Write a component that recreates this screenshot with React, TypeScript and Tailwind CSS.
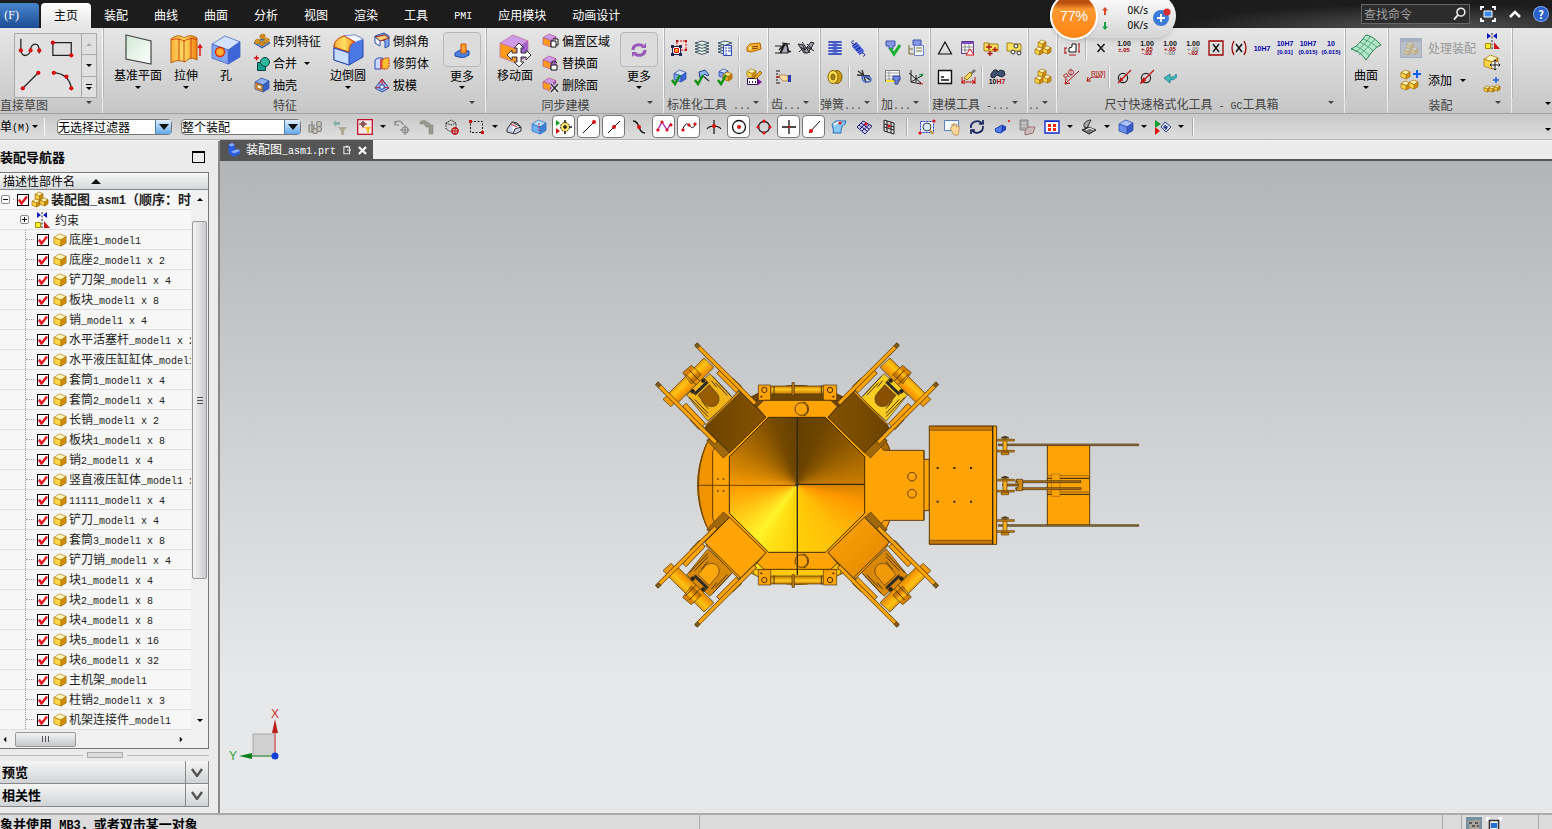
import type { ReactNode } from "react";
import clsx from "clsx";

const cube = (x: number, y: number, s: number, c = ["#fff4b8", "#ffd548", "#d08c10"], line = "#a87408") => (
	<g transform={`translate(${x} ${y}) scale(${s / 12})`} stroke={line} strokeWidth={9 / s} strokeLinejoin="round">
		<path d="M0 3.5 5.5 0 12 2.5 7 6Z" fill={c[0]} />
		<path d="M0 3.5 7 6V12L0 9.5Z" fill={c[1]} />
		<path d="M7 6 12 2.5V9L7 12Z" fill={c[2]} />
	</g>
);

const cubes = (
	<>
		{cube(3, 0, 8)}
		{cube(0, 7, 8)}
		{cube(8, 6, 8)}
	</>
);

const blue = ["#d5e2ff", "#7fa5f5", "#3c66d8"];
const warm = ["#cf9be8", "#ff9a1a", "#a060d0"];

const dot = (x: number, y: number, r = 1.6) => <circle cx={x} cy={y} r={r} fill="#e01010" />;
const check = <path d="M1 11l3 4 5-9" fill="none" stroke="#109010" strokeWidth="2.4" />;

const layers = (
	<g fill="#e4f0ea" stroke="#304858" strokeWidth=".9">
		{[11, 8, 5, 2].map((y) => (
			<path key={y} d={`M1 ${y + 1}l7 2.4 7-2.4-7-2z`} />
		))}
	</g>
);

const tolerance = (top: string, mid: string, low?: string, midColor = "#a00000", lowColor = "#a00000") => (
	<g fontFamily="Liberation Sans" textAnchor="middle" fontWeight="bold">
		<text x="8" y="6" fontSize="7" fill="#111">{top}</text>
		<text x="8" y={low ? 11 : 12} fontSize="6" fill={midColor}>{mid}</text>
		{low && <text x="8" y="15" fontSize="6" fill={lowColor}>{low}</text>}
	</g>
);

const fit = (top: string, low?: string) => (
	<g fontFamily="Liberation Sans" textAnchor="middle" fill="#0000a8" fontWeight="bold">
		<text x="8" y={low ? 6 : 11} fontSize="7">{top}</text>
		{low && <text x="8" y="14" fontSize="6">{low}</text>}
	</g>
);

const diameter = (
	<>
		<circle cx="7" cy="9" r="4.6" fill="none" stroke="#222" strokeWidth="1.2" />
		<path d="M2 14 15 1M4 12l1-3.5M4 12l3-1" stroke="#c01010" strokeWidth="1.3" fill="none" />
	</>
);

const art: Record<string, ReactNode> = {
	part: cube(1, 1, 14),
	assembly: cubes,
	constraint: (
		<>
			<path d="M3 0v6l4-3zM13 0v6L9 3z" fill="#1018c0" />
			<path d="M8 0v16" stroke="#222" strokeDasharray="2 1.5" />
			<path d="M1.5 10.500h5v5h-5z" fill="#ffee30" stroke="#a09000" />
			<path d="M10 9v7h6z" fill="#d01818" />
		</>
	),
	pattern: (
		<>
			<path d="M0 10l8-4 8 4-8 5z" fill="#6f98ee" stroke="#2a4fa8" />
			{cube(1, 6, 5, warm.map(() => "#ffb030"))}
			{cube(6, 1, 5, warm.map(() => "#ff9a1a"))}
			{cube(10, 5, 5, warm.map(() => "#ffb030"))}
			{cube(6, 8, 5, warm.map(() => "#ff9a1a"))}
		</>
	),
	unite: (
		<>
			<path d="M3.500 7.500h8v8h-8z" fill="#18a090" stroke="#064038" />
			<circle cx="11" cy="7" r="4.5" fill="#30b8a0" stroke="#064038" />
			<path d="M0 3h5M2.500.5v5" stroke="#d01010" strokeWidth="1.3" />
		</>
	),
	shell: (
		<>
			{cube(1, 1, 14, ["#8fb0f5", "#ffa030", "#3460c8"], "#2a4fa8")}
			<path d="M3 7l5 2v4l-5-2z" fill="#fff0d0" stroke="#a05000" />
		</>
	),
	chamfer: (
		<>
			<path d="M1 3l9-3 5 3v10l-4 2V8L1 5z" fill="#7fa5f5" stroke="#2a4fa8" />
			<path d="M1 4l10-2 4 3-9 3z" fill="#ffcf80" stroke="#b02000" />
			<path d="M1 4v6l5 3V8z" fill="#fff" stroke="#2a4fa8" />
		</>
	),
	trim: (
		<>
			<path d="M1 5l3-2h5v9l-2 2H1z" fill="#c8d8ff" stroke="#3048b0" />
			<path d="M8 5l3-2h4v9l-2 2H8z" fill="#ffc030" stroke="#c02000" strokeDasharray="2 1" />
			<path d="M7 4v10" stroke="#e02020" strokeWidth="1.5" />
		</>
	),
	draft: (
		<>
			<path d="M8 2l7 9-7 4-7-4z" fill="#9db9f6" stroke="#2a4fa8" />
			<path d="M8 2v9M1 11l7-1 7 1M5 7l3-5 3 5" stroke="#d02020" fill="none" />
			<path d="M6 8h4v4H6z" fill="#e8efff" stroke="#2a4fa8" />
		</>
	),
	offset: (
		<>
			{cube(0, 1, 13, warm, "#b05890")}
			<path d="M8 8h5v6H8zM10 6h5v6h-2" fill="#fff" stroke="#111" />
		</>
	),
	replace: (
		<>
			{cube(0, 1, 13, warm, "#b05890")}
			<path d="M8 10h6v5H8zM9 9V7h3M14 8l-2-2" fill="#fff" stroke="#111" />
		</>
	),
	remove: (
		<>
			{cube(0, 1, 13, warm, "#b05890")}
			<path d="M8 7l7 8M15 7l-7 8" stroke="#fff" strokeWidth="3" />
			<path d="M8 7l7 8M15 7l-7 8" stroke="#222" strokeWidth="1.4" />
		</>
	),
	attrs: (
		<>
			<path d="M6 1h9v9H6z" fill="#ffdcdc" stroke="#c01010" strokeDasharray="2 1" />
			<path d="M5 0h2v2H5zM14 0h2v2h-2zM14 9h2v2h-2z" fill="#c01010" />
			<path d="M1.500 6.500h8v8h-8z" fill="#fff" stroke="#202850" />
			<path d="M3.500 8.500h4v4h-4z" fill="#ffb000" stroke="#e00000" />
			<path d="M0 5h3v3H0zM8 5h3v3H8zM0 13h3v3H0zM8 13h3v3H8z" fill="#202850" />
		</>
	),
	layers,
	layerList: (
		<>
			{layers}
			<path d="M6.500 5.500h8v10h-8z" fill="#eef2ff" stroke="#3048c0" />
			<path d="M8 8h2M8 11h2M8 14h2M11 8h3M11 11h3" stroke="#3048c0" />
		</>
	),
	tag: (
		<>
			<path d="M1 7l3-3 10-1 1 6-10 3-4-1z" fill="#ffb830" stroke="#b06000" />
			<path d="M6 7l6-1M6 9l6-1" stroke="#7a3c00" />
			<circle cx="4" cy="8" r="1" fill="#fff" />
		</>
	),
	checkPart: <>{cube(3, 1, 12, blue, "#2848a8")}{check}</>,
	checkSketch: (
		<>
			<path d="M5 3l6-2 4 5-2 1-2-2-5 4z" fill="#8fb8f8" stroke="#204080" />
			<path d="M9 7l6 5" stroke="#333" strokeWidth="1.5" />
			{check}
		</>
	),
	checkAsm: <>{cube(2, 0, 9, blue, "#2848a8")}{cube(6, 3, 9, ["#ffe080", "#ffb020", "#c07800"])}{check}</>,
	editPart: (
		<>
			{cube(1, 0, 9)}
			<path d="M1.500 9.500h10v6h-10z" fill="#fff" stroke="#301060" />
			<path d="M3 13h1M6 13h1M9 13h1" stroke="#301060" strokeWidth="2" />
			<path d="M8 9l6-7 2 2-6 6z" fill="#ffb020" stroke="#704000" strokeWidth=".7" />
			<path d="M12 10l4 3-4 3z" fill="#8010a0" />
		</>
	),
	gear: (
		<g fill="none" stroke="#222">
			<path d="M5 13l4-8h3l1 8z" fill="#aab" />
			<path d="M0 6h6M0 13h5l4-9h3l2 9M4 10l5-6M6 13l4-9M13 10l3 2M7 3l8 1" strokeWidth="1.200" />
		</g>
	),
	gearPair: (
		<g fill="#99a" stroke="#222">
			<path d="M0 4l5 1 2 5 6-8 3 1-6 10H6z" />
			<path d="M1 12c4-5 9-6 15-1M4 2l8 11M3 7l5 6M9 4l5 5" fill="none" />
		</g>
	),
	hand: (
		<>
			<path d="M1 2h4M1 5h2M1 8h4M1 11h2M1 14h4" stroke="#111" />
			<path d="M1 8h4" stroke="#e00" />
			<path d="M4 6h5l4 1v5H8l-3-3z" fill="#ffdca0" stroke="#a07030" strokeWidth=".7" />
			<path d="M13 6h3v7h-3z" fill="#2838b0" />
		</>
	),
	spring: (
		<>
			<path d="M3 2h10v12H3z" fill="#e8ecff" />
			<path d="M2 2h12M2 5h12M2 8h12M2 11h12M2 14h12" stroke="#1828a8" strokeWidth="1.700" strokeLinecap="round" />
			<path d="M14 2 2 5M14 5 2 8M14 8 2 11M14 11 2 14" stroke="#4060d8" />
		</>
	),
	tension: (
		<>
			<path d="M4 4l8 9" stroke="#2840c0" strokeWidth="6" />
			<path d="M3 7l6-4M5 9l6-4M7 12l6-4M8 14l6-4" stroke="#a0b0f8" strokeWidth=".700" />
			<path d="M4 4C0 4 2 0 4 1M12 13c4 0 3 4 1 3" fill="none" stroke="#10188c" />
		</>
	),
	disc: (
		<g stroke="#806000">
			<ellipse cx="10" cy="8" rx="5" ry="6.500" fill="#c89a10" />
			<ellipse cx="6" cy="8" rx="5" ry="6.500" fill="#ffdc50" />
			<ellipse cx="6" cy="8" rx="2" ry="3" fill="#a08020" />
		</g>
	),
	cut: (
		<g fill="none" strokeWidth="1.400">
			<path d="M2 2l12 9M1 6l13 1M6 1l4 13" stroke="#333" />
			<path d="M6 8c0 6 8 6 9 3s-6-4-9-3z" stroke="#4068d0" />
		</g>
	),
	millCheck: (
		<>
			<path d="M1 1h9v5H8v3H4V6H1z" fill="#8898e8" stroke="#4050a8" />
			<path d="M5 8l4 6 6-9" fill="none" stroke="#18b030" strokeWidth="3" />
		</>
	),
	millSheet: (
		<>
			<path d="M5 0h8v5h-2v2H7V5H5z" fill="#8898e8" stroke="#4050a8" />
			<path d="M6.500 5.500h9v10h-9z" fill="#f4f6ff" stroke="#7080c0" />
			<path d="M1 5v9h5M1 9h4M8 8h6M8 11h6" stroke="#707030" fill="none" />
		</>
	),
	millTable: (
		<>
			<path d="M.5 1.500h14v11H.5z" fill="#fff" stroke="#777" />
			<path d="M0 4h15M0 7h15M0 10h15M4 1v12" stroke="#999" />
			<path d="M1 11h9v2H1z" fill="#ffe030" />
			<path d="M8 7h7v4h-2v4h-3v-4H8z" fill="#7088e0" stroke="#304090" />
		</>
	),
	axes: (
		<g fill="none" stroke="#222">
			<path d="M3 13V1M3 13l12-7M1 4l12 10M3 13l10 2M8 6v7" />
			<path d="M11 6l4-1-2 3" stroke="#109030" />
			<path d="M11 14l4 1" stroke="#c01010" />
		</g>
	),
	triangle: <path d="M8 2l6.500 12h-13z" fill="none" stroke="#111" strokeWidth="1.200" />,
	grid: (
		<>
			<path d="M1.500 1.500h12v12h-12z" fill="#fff" stroke="#553090" />
			<path d="M1 2h13v2H1z" fill="#8050c0" />
			<path d="M1 7h13M1 10h13M5 4v10M9 4v10" stroke="#888" />
			<path d="M10 9l4 6H6z" fill="#fff" stroke="#e01010" />
		</>
	),
	folderStar: (
		<>
			<path d="M1 3h5l1 1h8v7H1z" fill="#ffe060" stroke="#a08010" />
			<path d="M6 4v6M3 7h6M12 7v5M9.500 9.500h5M7 11v5M4.500 13.500h5" stroke="#b01010" strokeWidth="1.300" />
		</>
	),
	folderGear: (
		<>
			<path d="M1 3h5l1 1h8v7H1z" fill="#ffe060" stroke="#a08010" />
			<g fill="#eee" stroke="#333">
				<circle cx="10" cy="6" r="2" />
				<circle cx="7" cy="12" r="2" />
				<circle cx="13" cy="13" r="2" />
			</g>
		</>
	),
	note: (
		<>
			<path d="M1.500 1.500h13v13h-13z" fill="#fff" stroke="#111" strokeWidth="1.400" />
			<path d="M4 8h3M4 11h8" stroke="#111" strokeWidth="1.400" />
		</>
	),
	brush: (
		<>
			<path d="M2 8v7M15 8v7M2 13h13M5 11l-3 2 3 2M12 11l3 2-3 2" fill="none" stroke="#c01010" />
			<path d="M14 0l-4 4 1 2 5-4z" fill="#777" />
			<path d="M10 3l2 3-5 5-3-2z" fill="#ffdc60" stroke="#a07010" />
		</>
	),
	find: (
		<>
			<path d="M2 5l3-4h3l1 2 2-2 4 1 1 4-3 2-3-1-2-1-3 3-3-1z" fill="#405070" stroke="#202838" />
			<text x="8" y="15" fontFamily="Liberation Sans" fontSize="7" fontWeight="bold" textAnchor="middle" fill="#111">
				10<tspan fill="#b01010">H7</tspan>
			</text>
		</>
	),
	profile: (
		<>
			<path d="M5 11V8l3-1V4h4v8H5z" fill="#fff" stroke="#111" />
			<path d="M1 8v5M0 8h3M0 13h3M5 15h7M15 4v8M14 4h2M14 12h2" stroke="#b01010" />
		</>
	),
	cross: <path d="M4.500 4l7 8M11.500 4l-7 8" stroke="#111" strokeWidth="1.400" />,
	tol1: tolerance("1.00", "±.05"),
	tol2: tolerance("1.00", "+.05", "-.02"),
	tol3: tolerance("1.00", "+.05", "-.00", "#a00000", "#888"),
	tol4: tolerance("1.00", "+.00", "-.02", "#888", "#a00000"),
	boxX: (
		<>
			<path d="M1 1h14v14H1z" fill="none" stroke="#a00000" strokeWidth="1.300" />
			<path d="M5 4l6 8M11 4l-6 8" stroke="#111" strokeWidth="1.400" />
		</>
	),
	parenX: (
		<>
			<path d="M3 1Q-1 8 3 15M13 1q4 7 0 14" fill="none" stroke="#a00000" strokeWidth="1.300" />
			<path d="M5 4l6 8M11 4l-6 8" stroke="#111" strokeWidth="1.400" />
		</>
	),
	fit1: fit("10H7"),
	fit2: fit("10H7", "[0.01]"),
	fit3: fit("10H7", "(0.015)"),
	fit4: fit("10", "(0.015)"),
	radius: (
		<>
			<path d="M1 15 15 2M1 15l1-5M1 15l5-1" fill="none" stroke="#b01010" />
			<text x="1" y="8" fontFamily="Liberation Sans" fontSize="8" fill="#b01010" transform="rotate(-42 6 8)">RØ</text>
		</>
	),
	radiusNote: (
		<>
			<path d="M0 12l5-4h10M0 12l1-4M0 12h4" fill="none" stroke="#b01010" />
			<text x="4" y="7" fontFamily="Liberation Sans" fontSize="7" fill="#b01010">R[Ø]</text>
		</>
	),
	dia1: diameter,
	dia2: <>{diameter}<path d="M1 15l5-2-3-3z" fill="#c01010" /></>,
	back: <path d="M14 5c2 4-2 6-6 6v3l-6-5 6-4v3c3 0 5 0 6-3z" fill="#40b8b8" stroke="#107080" strokeWidth=".700" />,
	moveCube: (
		<>
			{cube(0, 0, 14)}
			<path d="M11 5l2.500 2.500L16 10l-5 5-5-5z" fill="#fff" />
			<path d="M11 5v10M6 10h10M9.500 6.500 11 5l1.500 1.500M9.500 13.500 11 15l1.500-1.500M7.500 8.500 6 10l1.500 1.500M14.500 8.500 16 10l-1.500 1.500" stroke="#111" fill="none" />
		</>
	),
	patternPart: (
		<>
			{cube(0, 9, 6)}
			{cube(5, 9, 6)}
			{cube(10, 8, 6)}
			<path d="M12 0v6M9 3h6" stroke="#1060e0" strokeWidth="1.400" />
		</>
	),
	ghostAsm: (
		<g fill="#c8c4b4" stroke="#888" strokeWidth="1.200">
			<path d="M2 6h5v7H2zM5 2v11" />
			<circle cx="12" cy="5" r="2.500" />
			<circle cx="12" cy="10" r="2.500" />
			<circle cx="8" cy="12" r="2.500" />
		</g>
	),
	ghostFilter: (
		<>
			<path d="M1 4l3-3v2h4v3H4v2z" fill="#8ab0a8" />
			<path d="M6 8h9l-3 4v4h-3v-4z" fill="#b0a890" />
		</>
	),
	filter: (
		<>
			<path d="M.7.7h14.600v14.600H.7z" fill="#f4e8e8" stroke="#c01030" strokeWidth="1.300" />
			<path d="M6 2v7M2 5h8" stroke="#703030" />
			<circle cx="6" cy="5" r="2" fill="none" stroke="#703030" />
			<path d="M7 8h7l-2 3v3h-2v-3z" fill="#ffc020" />
		</>
	),
	ghostSnap: (
		<g fill="none" stroke="#888" strokeWidth="1.200">
			<path d="M1 5c1-4 7-4 8 1M1 2v4h4" />
			<circle cx="11" cy="11" r="3" />
			<path d="M11 6v10M6 11h10" />
		</g>
	),
	ghostPick: <path d="M1 3c2-2 6-2 8 1h2v2h3v9h-4V8H7L5 5H1z" fill="#98988e" stroke="#8a8a84" strokeWidth=".600" />,
	lasso: (
		<>
			<path d="M2 4l5-3 5 3v5M2 4v6l5 3M2 4l5 2 5-2" fill="none" stroke="#222" strokeDasharray="1.500 1" />
			<circle cx="11" cy="12" r="3" fill="none" stroke="#c01010" strokeWidth="1.300" />
			<path d="M11 8v8M7 12h8" stroke="#c01010" />
		</>
	),
	rectPick: (
		<>
			<path d="M1.500 2.500h12v11h-12z" fill="none" stroke="#111" strokeDasharray="2 1.500" />
			<path d="M0 1h3v3H0zM12 12h3v3h-3z" fill="#d01010" />
		</>
	),
	house: (
		<>
			<path d="M1 10l5-7 5 1 4 4v4l-6 3-8-2z" fill="#c8d0e8" stroke="#333" />
			<path d="M6 3l9 5-6 2-2 5" fill="#f4f8ff" stroke="#333" />
			<path d="M5 5l6 3" stroke="#c01010" />
		</>
	),
	solid: (
		<>
			{cube(1, 1, 14, ["#b8e0ff", "#70b0f4", "#4080d8"], "#3070c0")}
			<path d="M8 4v8" stroke="#d01040" strokeDasharray="2 1" />
		</>
	),
	snapAll: (
		<>
			<circle cx="9" cy="8" r="4.500" fill="#ffe060" stroke="#333" strokeDasharray="2 1" />
			<path d="M9 1v3M9 12v3M13 8h3M9 6v4M7 8h4" stroke="#222" strokeWidth="1.600" />
			<path d="M0 1l4 3-4 3z" fill="#10a020" />
			<path d="M0 9l4 3-4 3z" fill="#d01010" />
		</>
	),
	endPoint: <><path d="M2 14 13 3" stroke="#111" />{dot(13, 3, 2)}</>,
	midPoint: <><path d="M2 14 14 2" stroke="#111" />{dot(8, 8, 2)}</>,
	curveEnd: <><path d="M2 2c8 0 4 12 12 12" fill="none" stroke="#111" strokeWidth="1.300" />{dot(8, 8, 2)}</>,
	poly: <><path d="M1 12 6 3l5 8 4-7" fill="none" stroke="#a020c0" strokeWidth="1.300" />{dot(2, 11)}{dot(6, 3)}{dot(11, 11)}{dot(15, 6)}</>,
	spline: <><path d="M1 12c3-9 6-8 8-5s4 2 6-3" fill="none" stroke="#111" />{dot(2, 11)}{dot(8, 6)}{dot(14, 5)}</>,
	intersect: <><path d="M1 10c3-4 11-4 14 0M8 1v14" fill="none" stroke="#111" strokeWidth="1.200" />{dot(8, 7, 2)}</>,
	center: <><circle cx="8" cy="8" r="6.500" fill="none" stroke="#111" strokeWidth="1.300" />{dot(8, 8, 2)}</>,
	quadrant: <><circle cx="8" cy="8" r="5.500" fill="none" stroke="#111" strokeWidth="1.300" />{dot(8, 2)}{dot(8, 14)}{dot(2, 8)}{dot(14, 8)}</>,
	point: <><path d="M8 1v14M1 8h14" stroke="#111" strokeWidth="1.300" />{dot(8, 8, 1)}</>,
	onCurve: <><path d="M3 14 14 2" stroke="#111" />{dot(5, 12, 2)}</>,
	onFace: <><path d="M1 6c2-4 6-5 9-4h5l-1 3c-4 2-4 6-4 9H2c1-2 0-5-1-8z" fill="#88c8f4" stroke="#2870b0" /><path d="M3 6c2-2 5-3 7-3" fill="none" stroke="#fff" strokeWidth="1.500" />{dot(9, 4)}</>,
	mesh: <><path d="M1 8l6-6 9 5-7 8z" fill="#c8c8f0" stroke="#202080" /><path d="M3 6l8 6M5 4l8 6M4 10l6-6M6 12l7-6" stroke="#202080" />{dot(10, 5)}</>,
	meshPoint: <><path d="M3 1l10 3v11L3 12zM6 2v11M10 3v11M3 5l10 3M3 8l10 3" fill="none" stroke="#222" />{dot(8, 7)}</>,
	zoomBox: (
		<>
			<path d="M1.500 2.500h13v11h-13z" fill="#eef4ff" stroke="#1030e0" strokeDasharray="2 1" />
			<circle cx="8" cy="8" r="4" fill="#d8e8ff" stroke="#444" />
			<path d="M11 11l3 4" stroke="#c89020" strokeWidth="2" />
			{dot(1, 14)}{dot(15, 2)}
		</>
	),
	pan: <><path d="M.500 1.500h14v10h-14z" fill="#f4f8ff" stroke="#6080c0" /><path d="M6 9l2-1V5l1.500 2L10 4l1.500 3 1-2 .500 3 2-1v5l-1 4h-4z" fill="#ffd898" stroke="#b08040" strokeWidth=".700" /></>,
	rotate: <path d="M2 9a6 6 0 0 1 11-4M14 7a6 6 0 0 1-11 4M10 5h4V1M6 11H2v4" fill="none" stroke="#182860" strokeWidth="1.700" />,
	pull: <><path d="M1 10l7-4 4 2-5 6-5-1z" fill="#5080f0" stroke="#2040a0" /><path d="M8 6l4 2v3l-5 3z" fill="#2848b8" />{dot(15, 2, 1)}</>,
	ghostView: <g stroke="#888" fill="#aaa"><path d="M1 1h8v10H1z" /><path d="M6 12l3-4h7l-2 6-8 2z" fill="#c8bcbc" stroke="#a07070" /><path d="M3 4h4M3 7h4" stroke="#ddd" /></g>,
	fitView: <><path d="M1 2h14v12H1z" fill="#fff" stroke="#1030d0" strokeWidth="1.400" /><path d="M1 2h14v1H1z" fill="#1030d0" /><path d="M4 5h3v3H4zM9 5h3v3H9zM4 9h3v3H4zM9 9h3v3H9z" fill="#f02800" /></>,
	style: <><path d="M3 8C2 4 6 1 10 1L6 9z" fill="#aaa" stroke="#333" /><path d="M1 11l7-3 7 3-7 4z" fill="#777" stroke="#222" /><path d="M5 11l4-2 4 2" stroke="#fff" fill="none" /></>,
	shaded: cube(1, 1, 14, ["#a8c0ff", "#6a90ee", "#3a5cc8"], "#2848a8"),
	section: <><path d="M0 1l6 4-6 4z" fill="#10a030" /><path d="M0 8l5 4-5 4z" fill="#e01010" /><path d="M6 8l4-5 6 5-5 5z" fill="#d8e0f8" stroke="#304090" /><path d="M8 8l2-2 3 2-2 3z" fill="#304090" /></>,
	checker: <><path d="M0 0h16v16H0z" fill="#7890a0" /><path d="M2 4l12-1-1 9-9 1z" fill="#aaa49c" /><path d="M3 5h3v2H3zM9 5h3v2H9zM6 8h3v2H6zM11 8h2v2h-2z" fill="#555" /></>,
	full: <><path d="M1 4V1h3M12 1h3v3M15 12v3h-3M4 15H1v-3" fill="none" stroke="#fff" strokeWidth="1.800" /><path d="M4 5h8v6H4z" fill="#3c8ae8" stroke="#fff" /></>,
	fullDark: <><path d="M1 4V1h3M12 1h3v3" fill="none" stroke="#fff" strokeWidth="2" /><path d="M3.500 3.500h9v12h-9z" fill="#fff" stroke="#333" strokeWidth="1.600" /><path d="M5 6h6v5H5z" fill="#2070d8" /></>,
	logo: <><path d="M3 2l4-2 3 2v6l4-1 2 2v3l-7 4-6-4z" fill="#2a5ce0" /><path d="M3 2l4-2 3 2-4 2zM6 10l4-2 4-1 2 2-7 3z" fill="#88b0ff" /></>,
	pin: <><path d="M3 3h9v11H3z" fill="none" stroke="#ddd" strokeWidth="1.800" /><path d="M6 1h4v3H6z" fill="#ddd" /><path d="M8 8h5M11 6l3 2-3 3" stroke="#eee" strokeWidth="1.400" fill="none" /></>,
};

function Icon({ name, size = "size-4" }: { name: string; size?: string }) {
	return (
		<svg viewBox="0 0 16 16" className={clsx("shrink-0 overflow-visible", size)} aria-hidden="true">
			{art[name]}
		</svg>
	);
}

function Arrow({ className = "text-black" }: { className?: string }) {
	return (
		<svg viewBox="0 0 6 3" className={clsx("h-[3px] w-1.5 shrink-0", className)} aria-hidden="true">
			<path d="M0 0h6L3 3z" fill="currentColor" />
		</svg>
	);
}

// Latin runs take half the width of a Chinese character
function Txt({ children, bold }: { children: string; bold?: boolean }) {
	return (
		<span className={clsx("whitespace-pre", bold ? "text-[13px] font-bold" : "text-xs")}>
			{children.split(/([\x20-\x7e]+)/).map((run, i) =>
				i % 2 ? (
					<span key={i} className={clsx("font-['Liberation_Mono',monospace]", bold ? "text-[12px]" : "text-[10px]")}>
						{run}
					</span>
				) : (
					run
				),
			)}
		</span>
	);
}

const tabs = ["主页", "装配", "曲线", "曲面", "分析", "视图", "渲染", "工具", "PMI", "应用模块", "动画设计"];

function TopBar() {
	return (
		<header className="flex h-7 items-end bg-[#1c1c1c] text-white">
			<button className="h-[25px] w-[39px] shrink-0 rounded-tr bg-linear-to-b from-[#4a86cc] to-[#1c4c94] pr-5 pb-0.5 text-right font-['Liberation_Serif',serif] text-xs">
				(F)
			</button>
			<nav className="ml-0.5 flex h-[25px]">
				{tabs.map((tab, i) => (
					<button
						key={tab}
						className={clsx("px-[13px] pb-0.5 whitespace-nowrap", i === 0 && "rounded-t bg-linear-to-b from-white to-[#e4e4e4] text-black")}
					>
						<Txt>{tab}</Txt>
					</button>
				))}
			</nav>
			<div className="ml-auto flex h-full w-[420px] items-center justify-end gap-2.5 bg-radial-[at_70%_100%] from-[#555] to-[#1c1c1c] to-60% pr-1">
				<label className="flex h-5 w-[109px] items-center border border-[#666] bg-[#2c2c2c] px-0.5">
					<input aria-label="查找命令" placeholder="查找命令" className="w-[88px] bg-transparent text-xs outline-none placeholder:text-[#a0a0a0]" />
					<svg viewBox="0 0 16 16" className="size-4" aria-hidden="true">
						<circle cx="9.500" cy="6" r="4.200" fill="none" stroke="#eee" strokeWidth="1.700" />
						<path d="M6.500 9 2 14" stroke="#eee" strokeWidth="2" />
					</svg>
				</label>
				<button aria-label="全屏"><Icon name="full" /></button>
				<button aria-label="折叠" className="mx-0.5">
					<svg viewBox="0 0 14 14" className="size-3.5"><path d="M2 10l5-5 5 5" fill="none" stroke="#fff" strokeWidth="2.600" /></svg>
				</button>
				<button aria-label="帮助" className="size-3.5 rounded-full bg-[#2c62c8] text-[11px] leading-3.5 font-bold ring-1 ring-[#7aa4ee]">?</button>
			</div>
		</header>
	);
}

function NetWidget() {
	return (
		<aside className="absolute -top-1.5 left-[1050px] z-10 flex h-11 w-[126px] items-center rounded-full bg-linear-to-b from-white to-[#d4d4d4] shadow-md">
			<div className="grid size-12 shrink-0 place-items-center rounded-full border-2 border-white bg-linear-to-b from-[#b85010] from-20% via-[#ff9830] via-35% to-[#ff8410] font-['Liberation_Sans',sans-serif] text-sm text-white shadow">
				77%
			</div>
			<div className="flex flex-1 flex-col gap-0.5 pt-1 pl-1 font-['Noto_Sans',sans-serif] text-[10px] leading-[13px] text-black">
				<div className="flex items-center justify-between">
					<svg viewBox="0 0 6 8" className="h-2 w-1.5"><path d="M3 0l3 3.500H4V8H2V3.500H0z" fill="#e04828" /></svg>
					0K/s
				</div>
				<div className="flex items-center justify-between">
					<svg viewBox="0 0 6 8" className="h-2 w-1.5"><path d="M3 8l3-3.500H4V0H2v4.500H0z" fill="#18a048" /></svg>
					0K/s
				</div>
			</div>
			<svg viewBox="0 0 20 20" className="mx-1 size-5" aria-hidden="true">
				<circle cx="9" cy="12" r="8" fill="#3c7cd8" />
				<path d="M9 8v8M5 12h8" stroke="#fff" strokeWidth="1.800" />
				<circle cx="15" cy="6" r="3.600" fill="#d83030" />
			</svg>
		</aside>
	);
}

function Group({ label, width, align = "text-center", children }: { label: string; width: string; align?: string; children: ReactNode }) {
	return (
		<section className={clsx("flex shrink-0 flex-col", width)}>
			<div className="flex h-[70px] border-r border-[#f8f8f8] shadow-[1px_0_0_#b4b4b4]">{children}</div>
			<div className="flex h-[15px] items-center border-r border-[#e8e8e8] pr-2 pb-0.5 text-[#444]">
				<span className={clsx("flex-1 leading-[15px] whitespace-nowrap", align)}><Txt>{label}</Txt></span>
				{label !== "" && <Arrow className="mx-0.5 mb-1 text-[#444]" />}
			</div>
		</section>
	);
}

function Big({ label, width, arrow, children }: { label: string; width: string; arrow?: boolean; children: ReactNode }) {
	return (
		<button className={clsx("flex shrink-0 flex-col items-center pt-1.5", width)}>
			<svg viewBox="0 0 32 32" className="size-8 shrink-0 overflow-visible" aria-hidden="true">{children}</svg>
			<span className="text-xs leading-[18px] whitespace-nowrap">{label}</span>
			{arrow && <Arrow className="mt-0.5" />}
		</button>
	);
}

function More({ children }: { children: ReactNode }) {
	return (
		<button className="ml-auto flex w-10 shrink-0 flex-col items-center pt-1">
			<span className="grid h-[35px] w-[38px] shrink-0 place-items-center rounded border border-[#b8b8b8] bg-[#dcdcdc]">
				<svg viewBox="0 0 16 16" className="size-4" aria-hidden="true">{children}</svg>
			</span>
			<span className="text-xs leading-[17px]">更多</span>
			<Arrow className="mt-0.5" />
		</button>
	);
}

function Stack({ items, width }: { items: [string, string][]; width: string }) {
	return (
		<div className={clsx("flex shrink-0 flex-col pt-0.5", width)}>
			{items.map(([icon, label]) => (
				<button key={label} className="flex h-[22px] items-center gap-[3px] text-xs whitespace-nowrap">
					<Icon name={icon} />
					{label}
					{label === "合并" && <Arrow className="ml-1" />}
				</button>
			))}
		</div>
	);
}

function Tools({ rows }: { rows: string[][] }) {
	return (
		<div className="flex flex-col pt-[5px] pl-[3px]">
			{rows.map((row, r) => (
				<div key={r} className="flex h-[29px] items-center">
					{row.map((name, i) =>
						name === "|" ? (
							<span key={i} className="mx-0.5 h-[22px] w-0.5 border-r border-[#f8f8f8] bg-[#b8b8b8]" />
						) : (
							<button key={i} aria-label={name} className="grid w-[23px] place-items-center"><Icon name={name} /></button>
						),
					)}
				</div>
			))}
		</div>
	);
}

function Ribbon() {
	return (
		<div className="relative flex h-[86px] overflow-hidden border-b border-[#a0a0a0] bg-linear-to-b from-[#e6e6e6] to-[#c6c6c6]">
			<Group label="直接草图" width="w-[103px]" align="text-left">
				<div className="mt-[5px] ml-3.5 flex h-[65px] w-[83px] border border-[#aaa] bg-[#e0e0e0]">
					<svg viewBox="0 0 66 65" className="w-[66px]" aria-label="草图曲线">
						<g fill="none" stroke="#222" strokeWidth="1.300">
							<path d="M5 5v12c1 8 9 6 10-1 1-7 8-8 9 0v4M38 9h19v13H38zM7 56l16-16M39 40c10 0 17 7 18 16" />
						</g>
						{[[5, 17], [15, 17], [24, 17], [38, 9], [57, 22], [7, 56], [23, 40], [39, 40], [52, 44], [57, 56]].map(([x, y]) => (
							<circle key={`${x}-${y}`} cx={x} cy={y} r="2.200" fill="#d81010" />
						))}
					</svg>
					<div className="flex flex-1 flex-col divide-y divide-[#aaa] border-l border-[#aaa]">
						<button aria-label="上一行" className="grid flex-1 place-items-center"><Arrow className="rotate-180 text-[#aaa]" /></button>
						<button aria-label="下一行" className="grid flex-1 place-items-center"><Arrow /></button>
						<button aria-label="展开" className="flex flex-1 flex-col items-center justify-center gap-0.5">
							<span className="h-px w-1.5 bg-black" />
							<Arrow />
						</button>
					</div>
				</div>
			</Group>
			<Group label="特征" width="w-[383px]">
				<Big label="基准平面" width="ml-[7px] w-14" arrow>
					<defs>
						<linearGradient id="plane" x2="1" y2="1"><stop stopColor="#cfe8d4" /><stop offset="1" stopColor="#fff" /></linearGradient>
						<linearGradient id="gold"><stop stopColor="#ffb040" /><stop offset=".5" stopColor="#ffe060" /><stop offset="1" stopColor="#f08010" /></linearGradient>
					</defs>
					<path d="M4 1l25 6v23L4 25z" fill="url(#plane)" stroke="#444" strokeWidth="1.200" />
				</Big>
				<Big label="拉伸" width="w-10" arrow>
					<path d="M1 5c5-4 9-4 13-1 4-3 9-3 13 0v22c-5-3-8-2-12 2-5-2-9-2-14 1z" fill="url(#gold)" stroke="#b85c00" />
					<path d="M9 4v22M14 6v22M21 4v21M1 6c5-2 9-1 13 1 5-3 9-3 13-1" fill="none" stroke="#d04010" />
					<path d="M30 22V12M28 14l2-3 2 3" fill="none" stroke="#e01010" strokeWidth="1.400" />
				</Big>
				<Big label="孔" width="w-10">
					{cube(2, 2, 28, blue, "#4060c0")}
					<circle cx="10" cy="18" r="4.500" fill="#ffb030" stroke="#e02800" strokeWidth="1.400" />
				</Big>
				<div className="w-2 shrink-0" />
				<Stack width="w-[72px]" items={[["pattern", "阵列特征"], ["unite", "合并"], ["shell", "抽壳"]]} />
				<Big label="边倒圆" width="w-11" arrow>
					<path d="M2 12Q3 6 12 2l11-1 8 4v18l-14 8-15-5z" fill="#4a78e4" stroke="#2848b0" />
					<path d="M12 2l11-1 8 4-8 3z" fill="#f4f8ff" stroke="#88a8e0" strokeWidth=".600" />
					<path d="M12 2l11 6c-4 1-6 4-6 10L2 13C2 7 6 4 12 2z" fill="url(#gold)" stroke="#d04000" />
					<path d="M2 14l15 5v12L2 26z" fill="#c8dcff" stroke="#2848b0" />
				</Big>
				<div className="w-1 shrink-0" />
				<Stack width="w-[60px]" items={[["chamfer", "倒斜角"], ["trim", "修剪体"], ["draft", "拔模"]]} />
				<More>
					<path d="M1 11l5-3 9 1v4l-6 3-8-2z" fill="#4a80e0" stroke="#2048a0" />
					<path d="M7 2h5v9H7z" fill="#ffa030" stroke="#d05000" />
				</More>
				<div className="w-[3px] shrink-0" />
			</Group>
			<Group label="同步建模" width="w-[178px]">
				<Big label="移动面" width="ml-px w-14">
					{cube(1, 1, 28, warm, "#c070a0")}
					<path d="M20 9l5 5h-3v5h5v-3l5 5-5 5v-3h-5v5h3l-5 5-5-5h3v-5h-5v3l-5-5 5-5v3h5v-5h-3z" fill="#fff" stroke="#333" />
				</Big>
				<Stack width="w-[72px]" items={[["offset", "偏置区域"], ["replace", "替换面"], ["remove", "删除面"]]} />
				<More>
					<path d="M2 8a6 5 0 0 1 10-4M14 8a6 5 0 0 1-10 4" fill="none" stroke="#9858b8" strokeWidth="3" />
					<path d="M10 6h5V1zM6 10H1v5z" fill="#9858b8" />
				</More>
				<div className="w-1 shrink-0" />
			</Group>
			<Group label="标准化工具 ..." width="w-[104px]" align="pl-[3px] text-left">
				<Tools rows={[["attrs", "layers", "layerList", "|", "tag"], ["checkPart", "checkSketch", "checkAsm", "|", "editPart"]]} />
			</Group>
			<Group label="齿..." width="w-[52px]" align="pl-[3px] text-left">
				<Tools rows={[["gear", "gearPair"], ["hand"]]} />
			</Group>
			<Group label="弹簧..." width="w-[58px]" align="text-left">
				<Tools rows={[["spring", "tension"], ["disc", "|", "cut"]]} />
			</Group>
			<Group label="加..." width="w-[52px]" align="pl-[3px] text-left">
				<Tools rows={[["millCheck", "millSheet"], ["millTable", "axes"]]} />
			</Group>
			<Group label="建模工具 -..." width="w-[98px]" align="pl-0.5 text-left">
				<Tools rows={[["triangle", "grid", "folderStar", "folderGear"], ["note", "brush", "|", "find"]]} />
			</Group>
			<Group label=".." width="w-[29px]" align="text-left">
				<Tools rows={[["assembly"], ["assembly"]]} />
			</Group>
			<Group label="尺寸快速格式化工具 - GC工具箱" width="w-[288px]">
				<Tools
					rows={[
						["profile", "|", "cross", "tol1", "tol2", "tol3", "tol4", "boxX", "parenX", "fit1", "fit2", "fit3", "fit4"],
						["radius", "radiusNote", "|", "dia1", "dia2", "back"],
					]}
				/>
			</Group>
			<Group label="" width="w-[43px]">
				<Big label="曲面" width="w-[42px]" arrow>
					<path d="M1 15C8 12 12 6 16 1c6 1 10 5 15 10-6 2-10 8-15 15C12 20 8 17 1 15z" fill="#b4e8c8" stroke="#208050" />
					<path d="M6 12c6 3 9 6 14 10M10 8c6 3 10 6 14 9M13 5c6 2 10 5 14 8M5 18C12 14 16 8 20 3M9 21c7-5 11-11 16-16" fill="none" stroke="#3c9868" strokeWidth=".800" />
				</Big>
			</Group>
			<Group label="装配" width="w-[124px]">
				<div className="flex w-[92px] shrink-0 flex-col pt-1 pl-3">
					<button disabled className="flex h-[31px] items-center gap-1.5 text-xs whitespace-nowrap text-[#999]">
						<span className="grid h-5 w-[22px] place-items-center border border-t-4 border-[#98a4b8] bg-[#b0b8c4] opacity-80"><Icon name="assembly" size="size-3.5 opacity-40" /></span>
						处理装配
					</button>
					<button className="flex h-[34px] items-center gap-1.5 text-xs whitespace-nowrap">
						<svg viewBox="0 0 22 22" className="h-[22px] w-[22px] shrink-0" aria-hidden="true">
							{cube(1, 1, 9)}
							{cube(1, 12, 9)}
							{cube(9, 11, 9)}
							<path d="M17 1v8M13 5h8" stroke="#1060f0" strokeWidth="2" />
						</svg>
						添加
						<Arrow className="ml-0.5" />
					</button>
				</div>
				<div className="flex flex-col pt-0.5 pl-1">
					{["constraint", "moveCube", "patternPart"].map((name) => (
						<button key={name} aria-label={name} className="grid h-[22px] place-items-center"><Icon name={name} /></button>
					))}
				</div>
			</Group>
			<div className="flex flex-1 items-end justify-end pr-px pb-2"><Arrow /></div>
		</div>
	);
}

// "*" in front marks a switched-on snap filter, "v" is a drop-down arrow
const selectionTools =
	"ghostAsm ghostFilter filter v ghostSnap ghostPick lasso rectPick v house solid *snapAll *endPoint *midPoint curveEnd *poly *spline intersect *center quadrant *point *onCurve onFace mesh meshPoint | zoomBox pan rotate pull ghostView fitView v style v shaded v section v |".split(
		" ",
	);

function Picker({ label, value, width }: { label: string; value: string; width: string }) {
	return (
		<label className={clsx("relative block h-4 shrink-0 rounded-sm border border-[#777] bg-white", width)}>
			<select aria-label={label} className="block h-3.5 w-full appearance-none bg-transparent text-xs leading-3.5 outline-none">
				<option>{value}</option>
			</select>
			<span className="pointer-events-none absolute inset-y-0 right-0 grid w-4 place-items-center border-l border-[#5080b0] bg-linear-to-b from-[#e0f0ff] to-[#60a8e8]">
				<svg viewBox="0 0 10 6" className="h-1.5 w-2.5"><path d="M0 0h10L5 6z" fill="#111" /></svg>
			</span>
		</label>
	);
}

function SelectionBar() {
	return (
		<div className="flex h-[26px] items-center border-b border-[#b0b0b0] bg-linear-to-b from-[#c8c8c8] to-[#dedede]">
			<button className="flex w-[45px] shrink-0 items-center gap-0.5 border-r border-[#f4f4f4]">
				<Txt>单(M)</Txt>
				<Arrow />
			</button>
			<div className="w-3 shrink-0" />
			<Picker label="选择过滤器" value="无选择过滤器" width="w-[115px]" />
			<div className="w-[9px] shrink-0" />
			<Picker label="选择范围" value="整个装配" width="mr-px w-[120px]" />
			{selectionTools.map((tool, i) => {
				if (tool === "v") return <button key={i} aria-label="更多选项" className="grid w-3 shrink-0 place-items-center"><Arrow /></button>;
				if (tool === "|") return <span key={i} className="mx-1.5 h-[18px] w-px shrink-0 bg-[#f8f8f8] shadow-[-1px_0_0_#aaa]" />;
				const on = tool.startsWith("*");
				const name = tool.replace("*", "");
				return (
					<button key={i} aria-label={name} className="grid w-[25px] shrink-0 place-items-center">
						<span className={clsx("grid size-[23px] place-items-center", on && "rounded-sm border border-[#777] bg-white")}>
							<Icon name={name} />
						</span>
					</button>
				);
			})}
			<span className="ml-auto pr-px pt-1.5"><Arrow /></span>
		</div>
	);
}

const parts = [
	"底座1_model1",
	"底座2_model1 x 2",
	"铲刀架_model1 x 4",
	"板块_model1 x 8",
	"销_model1 x 4",
	"水平活塞杆_model1 x 2",
	"水平液压缸缸体_model1",
	"套筒1_model1 x 4",
	"套筒2_model1 x 4",
	"长销_model1 x 2",
	"板块1_model1 x 8",
	"销2_model1 x 4",
	"竖直液压缸体_model1 x",
	"11111_model1 x 4",
	"铲刀_model1 x 4",
	"套筒3_model1 x 8",
	"铲刀销_model1 x 4",
	"块1_model1 x 4",
	"块2_model1 x 8",
	"块4_model1 x 8",
	"块5_model1 x 16",
	"块6_model1 x 32",
	"主机架_model1",
	"柱销2_model1 x 3",
	"机架连接件_model1",
];

function Check({ label }: { label: string }) {
	return (
		<span className="relative grid size-3 shrink-0 place-items-center">
			<input type="checkbox" defaultChecked aria-label={label} className="peer size-3 appearance-none border border-black bg-white" />
			<svg viewBox="0 0 12 12" className="pointer-events-none absolute inset-0 hidden size-3 peer-checked:block">
				<path d="M2 5.500 4.500 9.500l5.500-7" fill="none" stroke="#e80c18" strokeWidth="2.400" />
			</svg>
		</span>
	);
}

function Expander({ open }: { open?: boolean }) {
	return (
		<button aria-label={open ? "折叠" : "展开"} className="size-[9px] shrink-0 rounded-xs border border-[#888] bg-white">
			<svg viewBox="0 0 7 7" className="size-[7px]"><path d={open ? "M1 3.500h5" : "M1 3.500h5M3.500 1v5"} stroke="#111" /></svg>
		</button>
	);
}

function Navigator() {
	return (
		<aside className="flex w-[220px] shrink-0 flex-col border-r-2 border-[#888] bg-[#ebebeb] pr-[9px]">
			<div className="flex h-[31px] items-center justify-between pr-1">
				<h2 className="leading-4"><Txt bold>装配导航器</Txt></h2>
				<button aria-label="还原" className="h-3 w-[13px] border border-t-2 border-black" />
			</div>
			<div className="flex min-h-0 flex-1 flex-col border border-l-0 border-[#777] bg-white">
				<button className="flex h-[17px] shrink-0 items-center gap-4 border-b border-[#888] bg-linear-to-b from-[#f8f8f8] to-[#d4d8da] pl-[3px] text-xs leading-4">
					描述性部件名
					<svg viewBox="0 0 10 5" className="h-[5px] w-2.5"><path d="M0 5h10L5 0z" fill="#111" /></svg>
				</button>
				<div className="flex min-h-0 flex-1">
					<ul className="min-w-0 flex-1 overflow-hidden text-[#222] [&>li]:flex [&>li]:h-5 [&>li]:items-center [&>li]:border-b [&>li]:border-[#e0e0e0] [&>li]:whitespace-nowrap odd:[&>li]:bg-[#f7f7f7]">
						<li className="gap-[3px] pl-px">
							<Expander open />
							<span className="w-0.5 border-t border-dotted border-[#999]" />
							<Check label="装配图_asm1" />
							<Icon name="assembly" />
							<Txt bold>装配图_asm1（顺序：时</Txt>
						</li>
						<li className="gap-[5px] pl-5">
							<Expander />
							<Icon name="constraint" />
							<Txt>约束</Txt>
						</li>
						{parts.map((part) => (
							<li key={part}>
								<span className="ml-[25px] flex h-full w-3 shrink-0 items-center border-l border-dotted border-[#999]">
									<span className="w-2 border-t border-dotted border-[#999]" />
								</span>
								<Check label={part} />
								<span className="mr-0.5 ml-1"><Icon name="part" size="size-3.5" /></span>
								<Txt>{part}</Txt>
							</li>
						))}
					</ul>
					<div className="flex w-[17px] shrink-0 flex-col items-center bg-[#f0f0f0] py-2">
						<Arrow className="rotate-180" />
						<div className="mt-5 grid h-[358px] w-[15px] place-items-center rounded-xs border border-[#999] bg-linear-to-r from-[#f4f4f4] to-[#c8cace]">
							<span className="h-[7px] w-1.5 border-y border-[#555] bg-[linear-gradient(#555,#555)] bg-[length:100%_1px] bg-center bg-no-repeat" />
						</div>
						<Arrow className="mt-auto" />
					</div>
				</div>
				<div className="flex h-[18px] shrink-0 items-center bg-[#f0f0f0] pr-6 pl-0.5">
					<Arrow className="rotate-90" />
					<div className="ml-[7px] grid h-[15px] w-[61px] place-items-center rounded-xs border border-[#999] bg-linear-to-b from-[#f4f4f4] to-[#c4c6ca]">
						<span className="h-1.5 w-[7px] border-x border-[#555] bg-[linear-gradient(#555,#555)] bg-[length:1px_100%] bg-center bg-no-repeat" />
					</div>
					<Arrow className="ml-auto -rotate-90" />
				</div>
			</div>
			<div className="flex h-3 shrink-0 items-center gap-1">
				<span className="h-px flex-1 bg-[#bbb]" />
				<span className="h-1.5 w-9 border border-[#aaa] bg-[#ddd]" />
				<span className="h-px flex-1 bg-[#bbb]" />
			</div>
			{["预览", "相关性"].map((title) => (
				<button
					key={title}
					className="flex h-[23px] shrink-0 items-center justify-between border-r border-b border-[#888] bg-linear-to-b from-[#f6f6f6] to-[#d0d3d5] pl-0.5 leading-4"
				>
					<Txt bold>{title}</Txt>
					<span className="grid h-full w-[23px] place-items-center border-l border-[#888]">
						<svg viewBox="0 0 12 9" className="h-[9px] w-3"><path d="M1 1l5 7 5-7" fill="none" stroke="#555" strokeWidth="2.400" /></svg>
					</span>
				</button>
			))}
			<div className="h-1.5 shrink-0" />
		</aside>
	);
}

// Clockwise from the top: [angle, r, g, b]
const shades = [
	[0, 100, 64, 0],
	[25, 112, 70, 0],
	[50, 140, 88, 0],
	[85, 196, 122, 0],
	[105, 255, 152, 0],
	[140, 255, 190, 8],
	[180, 255, 208, 10],
	[205, 255, 226, 24],
	[218, 255, 244, 44],
	[240, 255, 206, 24],
	[265, 255, 162, 4],
	[285, 214, 134, 0],
	[315, 160, 100, 0],
	[340, 118, 74, 0],
	[360, 100, 64, 0],
];

function shadeAt(angle: number) {
	const i = Math.max(1, shades.findIndex((s) => s[0] >= angle));
	const a = shades[i - 1];
	const b = shades[i];
	const t = (angle - a[0]) / (b[0] - a[0]);
	return `rgb(${[1, 2, 3].map((k) => Math.round(a[k] + (b[k] - a[k]) * t)).join(",")})`;
}

function Cone({ clip }: { clip: string }) {
	const at = (deg: number) => `${471 + 340 * Math.sin((deg * Math.PI) / 180)},${465 - 340 * Math.cos((deg * Math.PI) / 180)}`;
	return (
		<g clipPath={`url(#${clip})`} stroke="none">
			{Array.from({ length: 180 }, (_, i) => (
				<polygon key={i} points={`471,465 ${at(i * 2)} ${at(i * 2 + 4)}`} fill={shadeAt(i * 2 + 1)} />
			))}
		</g>
	);
}

function Beam({ d, w = 9, fill = "#ffa406" }: { d: string; w?: number; fill?: string }) {
	return (
		<>
			<path d={d} stroke="#5c3c08" strokeWidth={w + 4} strokeLinecap="square" fill="none" />
			<path d={d} stroke={fill} strokeWidth={w} strokeLinecap="square" fill="none" />
		</>
	);
}

function Arm({ transform, cover, inner, rod }: { transform?: string; cover: string; inner: string; rod: string }) {
	return (
		<g transform={transform} stroke="#4a3410" strokeWidth="2">
			<path d="M150 270l26 28 18-2-30-36zM278 144l26 24-2 18-32-28z" fill="#b07808" />
			<path d="M200 330l24-4 44 42-18 16zM330 200l12 20 36 42-20-10z" fill="#a06808" />
			<Beam d="M240 130l48 48" w={12} />
			<Beam d="M138 230l48 50" w={12} />
			<path d="M140 195 210 131 280 205 203 273z" fill={inner} />
			<path d="M148 202l56 58M218 139l56 60M164 208l40 42M226 158l36 38M184 212l20 24M214 152l16 20" fill="none" strokeWidth="3" />
			<path d="M208 164l24 28c10 14 4 32-8 36-12 4-24 0-30-8l-20-24z" fill={rod} />
			<path d="M148 178l40-38 18 18-40 38z" fill={inner} />
			<path d="M164 192l38-36" stroke="#2a2a2a" strokeWidth="8" />
			<circle cx="190" cy="152" r="6" fill="#222" />
			<circle cx="158" cy="184" r="6" fill="#222" />
			<path d="M69 208l16-14 22 22-14 14z" fill="#f09a08" />
			<path d="M82 194 192 84l30 28L110 222z" fill="url(#tube)" />
			<path d="M128 128l26-22 30 28-30 28z" fill="url(#tube)" />
			<path d="M136 132l32 32M148 120l30 32" fill="none" strokeWidth="3" />
			<Beam d="M206 284 296 192" w={10} />
			<path d="M194 293 302 186 378 262 269 368z" fill={cover} strokeWidth="3" />
			<Beam d="M172 47 342 217" w={9} />
			<Beam d="M54 164 224 334" w={9} />
			<path d="M165 44l7-5 8 8-6 7zM48 162l7-6 8 8-6 7z" fill="#806020" />
		</g>
	);
}

function CrossBar({ transform, fill }: { transform?: string; fill: string }) {
	return (
		<g transform={transform} stroke="#4a3410" strokeWidth="2">
			<path d="M340 200c40-40 220-40 262 0v12H340z" fill={fill} />
			<path d="M392 168h160v24H392z" fill="url(#bar)" />
			<path d="M402 168v26M544 166v28" strokeWidth="3" />
			<path d="M355 165h37v46h-37zM550 165h40v46h-40z" fill="#ffa406" />
			<path d="M456 158h7v38h-7z" fill="#c88010" />
			<circle cx="373" cy="180" r="8" fill="none" strokeWidth="3" />
			<circle cx="570" cy="180" r="8" fill="none" strokeWidth="3" />
			<circle cx="364" cy="200" r="2" />
			<circle cx="580" cy="200" r="2" />
		</g>
	);
}

function Hinge({ y }: { y: number }) {
	return (
		<g stroke="#5c3c08" strokeWidth="2" fill="#d88808">
			<path d={`M459 ${y - 20}h12v44h-12z`} fill="#ffb020" />
			<path d={`M453 ${y - 22}q12-10 24 0z`} fill="#333" />
			<path d={`M442 ${y - 18}h51v5h-51zM442 ${y + 15}h51v5h-51zM454 ${y + 20}h22v8h-22z`} />
		</g>
	);
}

function Model() {
	const flipX = "translate(942 0) scale(-1 1)";
	const flipY = "translate(0 930) scale(1 -1)";
	return (
		<svg viewBox="220 161 1332 652" className="block size-full" role="img" aria-label="装配图">
			<defs>
				<clipPath id="disk"><circle cx="471" cy="465" r="299" /></clipPath>
				<clipPath id="bowl"><path d="M386 262H556L674 380V550L556 667H386L268 550V380Z" /></clipPath>
				<linearGradient id="tube" x1="0" y1="0" x2="1" y2="1">
					<stop offset=".36" stopColor="#d88000" />
					<stop offset=".46" stopColor="#ffc414" />
					<stop offset=".53" stopColor="#ffa406" />
					<stop offset=".64" stopColor="#c87800" />
				</linearGradient>
				<linearGradient id="bar" x2="0" y2="1">
					<stop stopColor="#c87800" />
					<stop offset=".4" stopColor="#ffc820" />
					<stop offset="1" stopColor="#c87800" />
				</linearGradient>
				<linearGradient id="shadeCover"><stop stopColor="#6c4400" /><stop offset="1" stopColor="#845200" /></linearGradient>
				<linearGradient id="litCover" x2="1" y2="1"><stop stopColor="#e08600" /><stop offset="1" stopColor="#ffa406" /></linearGradient>
			</defs>
			<g transform="translate(640 330) scale(.33333)">
				<Cone clip="disk" />
				<path d="M260 253A299 299 0 0 0 260 677Z" fill="#f09400" />
				<circle cx="471" cy="465" r="298" fill="none" stroke="#6a4408" strokeWidth="3" />
				<path d="M200 340A330 330 0 0 0 200 590" fill="none" stroke="#6a4408" strokeWidth="3" />
				<CrossBar fill="#6e4600" />
				<CrossBar fill="#ffc810" transform={flipY} />
				<path
					d="M372 211H572L715 345 732 361H852V388H868V542H852V571H732L715 590 572 718H372L228 585 218 565V365L228 345Z"
					fill="#ffa406"
					stroke="#5c3c08"
					strokeWidth="3"
				/>
				<path d="M852 361v210" stroke="#5c3c08" strokeWidth="3" />
				<Cone clip="bowl" />
				<path d="M386 262H556L674 380V550L556 667H386L268 550V380Z" fill="none" stroke="#3c2c14" strokeWidth="3" />
				<path d="M172 466H470" stroke="#6a4408" strokeWidth="3" />
				<path d="M470 463H674M472 262V735" stroke="#302818" strokeWidth="4" />
				<circle cx="471" cy="465" r="5" fill="#333" />
				<g fill="none" stroke="#5c3c08" strokeWidth="3">
					<circle cx="484" cy="237" r="19" />
					<path d="M490 216a22 22 0 0 1 0 42M490 672a22 22 0 0 1 0 42" />
					<circle cx="484" cy="693" r="19" />
					<circle cx="816" cy="440" r="13" />
					<circle cx="816" cy="491" r="13" />
				</g>
				<path d="M231 447h5M248 447h5M231 483h5M248 483h5" stroke="#5c3c08" strokeWidth="5" />
				<Arm cover="url(#shadeCover)" inner="#f0b418" rod="#985c00" />
				<Arm cover="url(#shadeCover)" inner="#f8cc20" rod="#885000" transform={flipX} />
				<Arm cover="#ffa406" inner="#d88808" rod="#ffa80c" transform={flipY} />
				<Arm cover="url(#litCover)" inner="#d88808" rod="#f09808" transform={`${flipX} ${flipY}`} />
			</g>
			<g transform="translate(850 410) scale(.33333)">
				<path d="M238 48H440V403H238Z" fill="#ffa406" stroke="#5c3c08" strokeWidth="3" />
				<path d="M238 49H428V61H238ZM238 391H428V402H238Z" fill="#c87800" stroke="#5c3c08" strokeWidth="2" />
				<path d="M428 48V403" stroke="#302818" strokeWidth="4" />
				{[263, 313, 363].map((x) => (
					<path key={x} d={`M${x - 3} 174h6M${x - 3} 275h6`} stroke="#302818" strokeWidth="6" />
				))}
				<path d="M592 104H719V346H592Z" fill="#ffa406" stroke="#5c3c08" strokeWidth="3" />
				<path d="M592 197H719M592 246H719" stroke="#b87008" strokeWidth="4" />
				<path d="M592 205H719M592 253H719" stroke="#222" strokeWidth="3" />
				<g fill="#d08810" stroke="#4a3410" strokeWidth="2">
					<path d="M605 192h25v67h-25z" fill="#ffa406" stroke="#a06408" />
					<path d="M445 102h421v5H445zM445 344h421v5H445z" fill="#907040" />
					<path d="M497 212h196v6H497zM497 233h196v6H497zM458 222h60v6h-60z" fill="#a87018" />
					<path d="M498 208h20v34h-20l8-17z" />
				</g>
				<Hinge y={106} />
				<Hinge y={226} />
				<Hinge y={347} />
			</g>
			<g>
				<path d="M253 734h22v22h-22z" fill="#c8c8c8" fillOpacity=".7" stroke="#aaa" />
				<path d="M275 755v-26" stroke="#d08080" strokeWidth="2" />
				<path d="M275 719l3 14h-6z" fill="#b82020" />
				<path d="M275 756h-28" stroke="#60a060" strokeWidth="1.500" />
				<path d="M239 756l13-3v6z" fill="#108020" />
				<circle cx="275" cy="756" r="3.500" fill="#1040d8" />
				<text x="271" y="718" fontFamily="Liberation Sans" fontSize="12" fill="#d03030">X</text>
				<text x="229" y="760" fontFamily="Liberation Sans" fontSize="12" fill="#30a030">Y</text>
			</g>
		</svg>
	);
}

function Workspace() {
	return (
		<main className="flex min-w-0 flex-1 flex-col">
			<div className="flex h-5 shrink-0 items-center border-b-2 border-[#555] bg-[#ebebeb]">
				<div className="flex h-5 items-center gap-1.5 bg-[#555] px-1.5 text-white">
					<Icon name="logo" size="size-3.5" />
					<Txt>装配图_asm1.prt</Txt>
					<button aria-label="固定"><Icon name="pin" size="size-2.5" /></button>
					<button aria-label="关闭">
						<svg viewBox="0 0 10 10" className="size-[9px]"><path d="M1 1l8 8M9 1L1 9" stroke="#fff" strokeWidth="2.400" /></svg>
					</button>
				</div>
			</div>
			<div className="min-h-0 flex-1 bg-linear-to-b from-[#b3b4b5] via-[#cecfd0] via-40% to-[#e6e8ea] to-80%">
				<Model />
			</div>
		</main>
	);
}

export default function App() {
	return (
		<div className="relative flex h-screen flex-col overflow-hidden bg-[#ebebeb] font-['Noto_Sans_CJK_SC','Liberation_Sans',sans-serif] text-xs text-black">
			<TopBar />
			<NetWidget />
			<Ribbon />
			<SelectionBar />
			<div className="flex min-h-0 flex-1 border-t border-[#f4f4f4]">
				<Navigator />
				<Workspace />
			</div>
			<footer className="flex h-4 shrink-0 items-start overflow-hidden border-t-2 border-[#aaa] bg-[#dcdcdc]">
				<p className="w-[700px] border-r border-[#aaa] leading-[18px] whitespace-nowrap"><Txt bold>象并使用 MB3，或者双击某一对象</Txt></p>
				<div className="ml-auto flex h-full items-start">
					<span className="h-full w-5 border-x border-[#aaa]" />
					<button aria-label="渲染" className="mt-0.5 ml-1"><Icon name="checker" /></button>
					<button aria-label="全屏显示" className="mt-0.5 ml-1"><Icon name="fullDark" /></button>
					<span className="ml-9 h-full w-[14px] border-l border-[#aaa]" />
				</div>
			</footer>
		</div>
	);
}
